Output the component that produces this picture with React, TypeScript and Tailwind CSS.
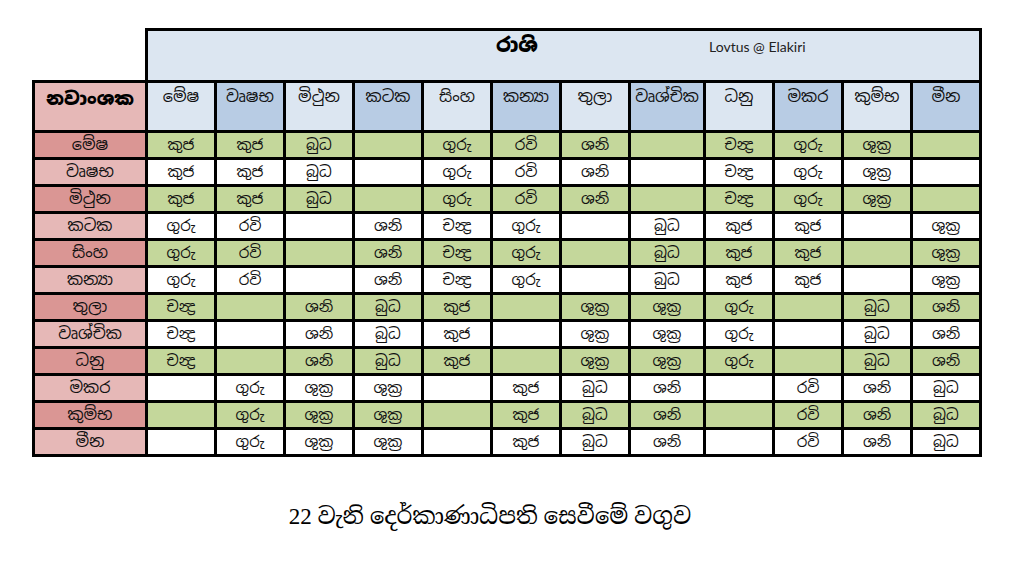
import React from "react";

const SI = { fontFamily: '"Noto Sans Sinhala", "Noto Serif Sinhala", "Iskoola Pota", "Noto Sans", sans-serif' };

const signs = ["මේෂ", "වෘෂභ", "මිථුන", "කටක", "සිංහ", "කන්‍යා", "තුලා", "වෘශ්චික", "ධනු", "මකර", "කුම්භ", "මීන"];

const CH = "චන්‍ද්‍ර";
const A = ["කුජ", "කුජ", "බුධ", "", "ගුරු", "රවි", "ශනි", "", CH, "ගුරු", "ශුක්‍ර", ""];
const B = ["ගුරු", "රවි", "", "ශනි", CH, "ගුරු", "", "බුධ", "කුජ", "කුජ", "", "ශුක්‍ර"];
const C = [CH, "", "ශනි", "බුධ", "කුජ", "", "ශුක්‍ර", "ශුක්‍ර", "ගුරු", "", "බුධ", "ශනි"];
const D = ["", "ගුරු", "ශුක්‍ර", "ශුක්‍ර", "", "කුජ", "බුධ", "ශනි", "", "රවි", "ශනි", "බුධ"];
const rows = [A, A, A, B, B, B, C, C, C, D, D, D];

export default function App() {
  return (
    <div className="w-[1017px] h-[577px] bg-white overflow-hidden pt-[28px] pl-[32px]" style={SI}>
      <div className="w-[950px]">
        <div className="flex">
          <div className="w-[113px] shrink-0" />
          <div className="flex-1 h-[52px] border-t-[3px] border-l-[3px] border-r-[3px] border-black bg-[#dce6f1] flex items-start pl-[329px]">
            <span className="w-[80px] text-center text-[20px] font-black leading-[28px] text-black">රාශි</span>
            <span className="ml-[152px] pt-[6px] text-[14px] leading-[20px] text-[#222]" style={{ fontFamily: 'Lato, "Open Sans", sans-serif' }}>
              Lovtus @ Elakiri
            </span>
          </div>
        </div>
        <div className="grid bg-black p-[3px] gap-[3px] grid-cols-[110px_repeat(7,66px)_72px_repeat(4,66px)] grid-rows-[47px_repeat(12,24px)]">
          <div className="bg-[#e6b8b7] flex justify-center items-start pt-[2px] text-[18px] font-black leading-[28px] text-black">නවාංශක</div>
          {signs.map((s, i) => (
            <div
              key={s}
              className={`${i % 2 === 0 ? "bg-[#dce6f1]" : "bg-[#b8cce4]"} flex justify-center items-start pt-[1px] text-[16px] leading-[26px] text-[#111]`}
            >
              {s}
            </div>
          ))}
          {rows.map((r, ri) => (
            <React.Fragment key={ri}>
              <div
                className={`${ri % 2 === 0 ? "bg-[#da9694]" : "bg-[#e6b8b7]"} flex items-center justify-center text-[16px] leading-[24px] text-[#111]`}
              >
                {signs[ri]}
              </div>
              {r.map((c, ci) => (
                <div
                  key={ci}
                  className={`${ri % 2 === 0 ? "bg-[#c4d79b]" : "bg-white"} flex items-center justify-center text-[15px] leading-[24px] text-[#111]`}
                >
                  {c}
                </div>
              ))}
            </React.Fragment>
          ))}
        </div>
        <div className="mt-[45px] pr-[34px] text-center text-[23px] leading-[30px] text-black" style={{ fontFamily: '"Liberation Serif", "Noto Serif Sinhala", "Noto Sans Sinhala", serif' }}>
          22 වැනි දෙර්කාණාධිපති සෙවීමේ වගුව
        </div>
      </div>
    </div>
  );
}
